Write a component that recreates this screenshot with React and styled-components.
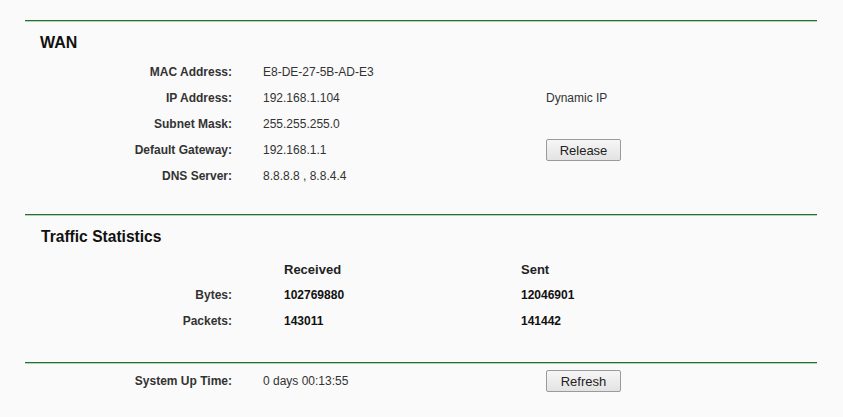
import React from "react";
import styled, { createGlobalStyle } from "styled-components";

const GlobalStyle = createGlobalStyle`
  body {
    margin: 0;
    background: #fafafa;
    font-family: "Liberation Sans", Arial, sans-serif;
    color: #222;
  }
`;

const wanRows = [
  { label: "MAC Address:", value: "E8-DE-27-5B-AD-E3" },
  { label: "IP Address:", value: "192.168.1.104", extra: "Dynamic IP" },
  { label: "Subnet Mask:", value: "255.255.255.0" },
  { label: "Default Gateway:", value: "192.168.1.1", button: "Release" },
  { label: "DNS Server:", value: "8.8.8.8 , 8.8.4.4" },
];

const trafficRows = [
  { label: "Bytes:", received: "102769880", sent: "12046901" },
  { label: "Packets:", received: "143011", sent: "141442" },
];

export default function App() {
  return (
    <>
      <GlobalStyle />
      <Page>
        <Section $after={25}>
          <Title>WAN</Title>
          <Rows $top={6}>
            {wanRows.map((r) => (
              <InfoRow key={r.label}>
                <Label>{r.label}</Label>
                <Value>{r.value}</Value>
                <Extra>
                  {r.extra}
                  {r.button && <Button>{r.button}</Button>}
                </Extra>
              </InfoRow>
            ))}
          </Rows>
        </Section>

        <Section $after={28}>
          <Title $indent={16} $size={15.6}>Traffic Statistics</Title>
          <Rows $top={9}>
            <StatRow>
              <Label />
              <Head>Received</Head>
              <Head>Sent</Head>
            </StatRow>
            {trafficRows.map((r) => (
              <StatRow key={r.label}>
                <Label>{r.label}</Label>
                <Num>{r.received}</Num>
                <Num>{r.sent}</Num>
              </StatRow>
            ))}
          </Rows>
        </Section>

        <Section $after={20}>
          <Rows $top={5}>
            <InfoRow>
              <Label>System Up Time:</Label>
              <Value>0 days 00:13:55</Value>
              <Extra>
                <Button>Refresh</Button>
              </Extra>
            </InfoRow>
          </Rows>
        </Section>
      </Page>
    </>
  );
}

const Page = styled.div`
  padding: 20px 0 0 25px;
  width: 792px;
`;

const Section = styled.section`
  border-top: 1px solid #2d6b3b;
  box-shadow: inset 0 1px 0 #a9d8b3;
  padding-bottom: ${(p) => p.$after}px;
`;

const Title = styled.h2`
  margin: 0;
  padding: 12px 0 0 ${(p) => p.$indent || 15}px;
  font-size: ${(p) => p.$size || 16}px;
  line-height: 20px;
  font-weight: bold;
  color: #111;
`;

const Rows = styled.div`
  display: flex;
  flex-direction: column;
  padding-top: ${(p) => p.$top}px;
`;

const InfoRow = styled.div`
  display: grid;
  grid-template-columns: 207px 314px 1fr;
  align-items: center;
  height: 26px;
`;

const StatRow = styled.div`
  display: grid;
  grid-template-columns: 207px 237px 1fr;
  align-items: center;
  height: 26px;
`;

const Label = styled.div`
  text-align: right;
  font-size: 12px;
  font-weight: bold;
  color: #333;
`;

const Value = styled.div`
  padding-left: 31px;
  font-size: 12px;
  color: #333;
`;

const Extra = styled.div`
  font-size: 12px;
  color: #333;
  display: flex;
  align-items: center;
`;

const Head = styled.div`
  padding-left: 52px;
  font-size: 13px;
  font-weight: bold;
  color: #222;
`;

const Num = styled.div`
  padding-left: 52px;
  font-size: 12px;
  font-weight: bold;
  color: #111;
`;

const Button = styled.button`
  width: 75px;
  height: 22px;
  padding: 0;
  border: 1px solid #9a9a9a;
  border-radius: 2px;
  background: linear-gradient(#f6f6f6, #e3e3e3);
  font-family: "Liberation Sans", Arial, sans-serif;
  font-size: 13px;
  color: #222;
`;
